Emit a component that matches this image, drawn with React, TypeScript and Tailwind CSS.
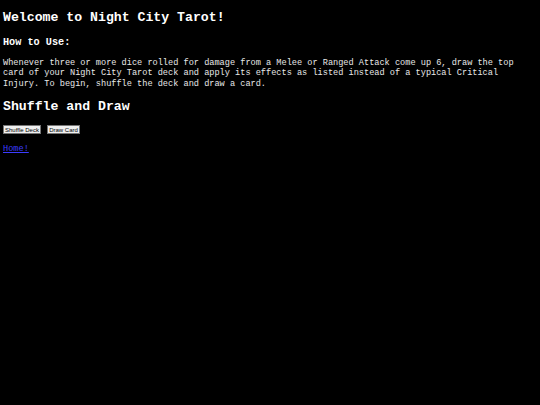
export default function App() {
  return (
    <div className="min-h-[405px] bg-black px-[3px] pt-[10px] text-white font-['Liberation_Mono',monospace]">
      <h1 className="text-[13.2px] font-bold leading-[15px]">Welcome to Night City Tarot!</h1>

      <h3 className="mt-[12px] text-[10.2px] font-bold leading-[12px]">How to Use:</h3>
      <p className="mt-[9px] text-[8.6px] leading-[10.4px] text-[#e8e8e8]">
        Whenever three or more dice rolled for damage from a Melee or Ranged Attack come up 6, draw the top
        card of your Night City Tarot deck and apply its effects as listed instead of a typical Critical
        Injury. To begin, shuffle the deck and draw a card.
      </p>

      <h2 className="mt-[10px] text-[13.2px] font-bold leading-[15px]">Shuffle and Draw</h2>

      <div className="mt-[11px] flex gap-[6px]">
        <button className="h-[9px] w-[38px] flex items-center justify-center border border-[#767676] bg-[#efefef] text-[6px] leading-none text-black font-['Liberation_Sans',sans-serif]">
          Shuffle Deck
        </button>
        <button className="h-[9px] w-[33px] flex items-center justify-center border border-[#767676] bg-[#efefef] text-[6px] leading-none text-black font-['Liberation_Sans',sans-serif]">
          Draw Card
        </button>
      </div>

      <a href="#" className="mt-[10px] block w-fit text-[8.6px] leading-[10.4px] text-[#3c3cff] underline">
        Home!
      </a>
    </div>
  )
}
